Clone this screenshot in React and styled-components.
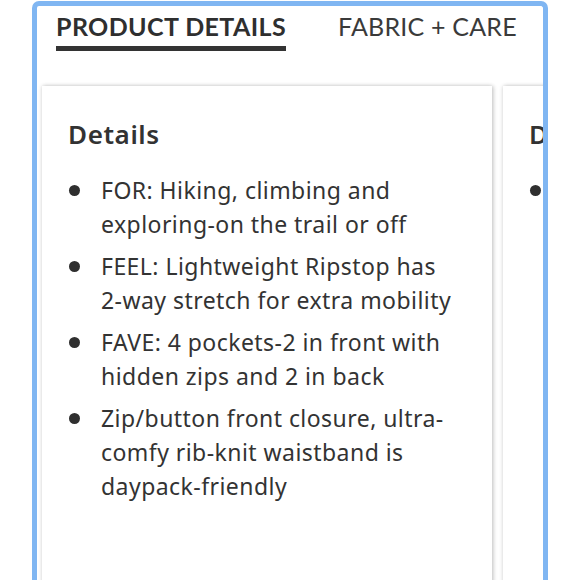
import styled, { createGlobalStyle } from "styled-components";

const GlobalStyle = createGlobalStyle`
  html, body {
    margin: 0;
    padding: 0;
    background: #ffffff;
    overflow: hidden;
  }
  body {
    font-family: "Noto Sans", "Lato", sans-serif;
    color: #333333;
  }
`;

const Page = styled.div`
  width: 580px;
  height: 580px;
  overflow: hidden;
  padding-top: 1px;
  box-sizing: border-box;
`;

const Frame = styled.div`
  margin-left: 32px;
  width: 516px;
  height: 640px;
  box-sizing: border-box;
  border: 5px solid #80b6f2;
  border-bottom: none;
  border-radius: 7px 7px 0 0;
  overflow: hidden;
  background: #ffffff;
`;

const Tabs = styled.div`
  display: flex;
  align-items: flex-start;
  gap: 52px;
  padding: 4px 0 0 19px;
  height: 80px;
  box-sizing: border-box;
`;

const Tab = styled.div`
  font-family: "Lato", sans-serif;
  font-size: 25px;
  line-height: 32px;
  white-space: nowrap;
  font-weight: ${(p) => (p.$active ? 700 : 400)};
  color: ${(p) => (p.$active ? "#2f2f2f" : "#3a3a3a")};
  letter-spacing: ${(p) => (p.$active ? "0.4px" : "0.2px")};
  padding-bottom: 4px;
  border-bottom: 5px solid ${(p) => (p.$active ? "#333333" : "transparent")};
`;

const Cards = styled.div`
  display: flex;
  gap: 11px;
  padding-left: 5px;
`;

const Card = styled.div`
  flex: 0 0 450px;
  height: 520px;
  box-sizing: border-box;
  background: #ffffff;
  padding: 31px 0 0 26px;
  box-shadow: 0 0 4px rgba(0, 0, 0, 0.18), 2px 0 4px rgba(0, 0, 0, 0.12);
`;

const Heading = styled.h2`
  margin: 0 0 22px;
  font-size: 26px;
  line-height: 34px;
  font-weight: 600;
  letter-spacing: 0.6px;
  color: #333333;
`;

const List = styled.ul`
  margin: 0;
  padding: 0;
  list-style: none;
`;

const Item = styled.li`
  position: relative;
  padding-left: 33px;
  margin-bottom: 8px;
  font-size: 23px;
  line-height: 34px;
  letter-spacing: 0.45px;
  color: #333333;
  white-space: nowrap;

  &::before {
    content: "";
    position: absolute;
    left: 1px;
    top: 12px;
    width: 11px;
    height: 11px;
    border-radius: 50%;
    background: #2f2f2f;
  }
`;

const details = [
  ["FOR: Hiking, climbing and", "exploring-on the trail or off"],
  ["FEEL: Lightweight Ripstop has", "2-way stretch for extra mobility"],
  ["FAVE: 4 pockets-2 in front with", "hidden zips and 2 in back"],
  ["Zip/button front closure, ultra-", "comfy rib-knit waistband is", "daypack-friendly"],
];

export default function App() {
  return (
    <Page>
      <GlobalStyle />
      <Frame>
        <Tabs>
          <Tab $active>PRODUCT DETAILS</Tab>
          <Tab>FABRIC + CARE</Tab>
        </Tabs>
        <Cards>
          <Card>
            <Heading>Details</Heading>
            <List>
              {details.map((lines, i) => (
                <Item key={i}>
                  {lines.map((l, j) => (
                    <div key={j}>{l}</div>
                  ))}
                </Item>
              ))}
            </List>
          </Card>
          <Card>
            <Heading>Details</Heading>
            <List>
              <Item>
                <div>FOR: Everyday wear</div>
              </Item>
            </List>
          </Card>
        </Cards>
      </Frame>
    </Page>
  );
}
